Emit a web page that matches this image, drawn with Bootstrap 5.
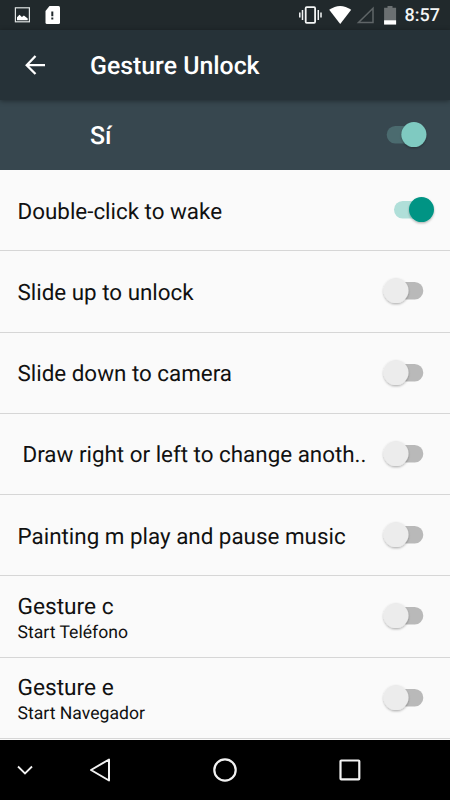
<!DOCTYPE html>
<html lang="es">
<head>
<meta charset="utf-8">
<meta name="viewport" content="width=device-width, initial-scale=1">
<title>Gesture Unlock</title>
<link href="https://cdn.jsdelivr.net/npm/bootstrap@5.3.0/dist/css/bootstrap.min.css" rel="stylesheet">
<style>
body{font-family:Roboto,"Liberation Sans",sans-serif;background:#fafafa;color:#111;height:800px;overflow:hidden;text-rendering:geometricPrecision}
svg{display:block;flex:none}
.status{height:30px;background:#21292c;padding:0 10px 0 14px}
.clock{font-size:18px;font-weight:500;line-height:30px;color:#f4f6f6;padding-top:2px}
.appbar{height:70px;background:#263238;padding-left:25px;box-shadow:0 1px 5px rgba(0,0,0,.4);z-index:1}
.heading{font-size:24.85px;font-weight:500;line-height:30px;padding-top:3px}
.master{height:70px;background:#37474f;padding:0 20.5px 0 90px}
.prefs{height:570px;overflow:hidden}
.pref{height:81.28px;flex:none;border-bottom:1px solid #d6d6d6;padding:0 22px 0 17.5px}
.pref-on{padding-right:13.5px}
.title{font-size:22.4px;line-height:28px;padding-top:3px}
.nudge{padding-left:5px}
.two-line{padding-top:1.5px}
.two-line .title{font-size:22.7px;padding-top:2px}
.summary{font-size:17.6px;line-height:22px;padding-top:1px}
.navkeys{height:60px;background:#000}
</style>
</head>
<body class="d-flex flex-column">
<svg width="0" height="0" class="position-absolute">
  <defs>
    <filter id="sh" x="-30%" y="-30%" width="160%" height="170%"><feDropShadow dx="0" dy="1.2" stdDeviation=".8" flood-color="#000" flood-opacity=".3"/></filter>
    <symbol id="off" viewBox="0 0 48 34"><rect x="9" y="8.1" width="34.3" height="17.3" rx="8.6" fill="#b9b9b9"/><circle cx="16" cy="16.6" r="12.5" fill="#ececec" filter="url(#sh)"/></symbol>
    <symbol id="on" viewBox="0 0 48 34"><rect x="5" y="8.1" width="34" height="17.3" rx="8.6" fill="#b0dfd9"/><circle cx="32.5" cy="16.6" r="12.5" fill="#069484" filter="url(#sh)"/></symbol>
    <symbol id="dim" viewBox="0 0 48 34"><rect x="4.7" y="8.1" width="34" height="17.3" rx="8.6" fill="#4b6b6f"/><circle cx="31.9" cy="16.6" r="12.5" fill="#7fcac1" filter="url(#sh)"/></symbol>
  </defs>
</svg>

<header class="status d-flex align-items-center justify-content-between">
  <svg width="50" height="30" viewBox="14 0 50 30">
    <rect x="15.4" y="7.8" width="14" height="14" fill="none" stroke="#dfe3e3" stroke-width="1.2"/>
    <path d="M17 20.3v-3l2.5-2.6 2.4 2.4 2-1.5 3.8 3v1.7z" fill="#fff"/>
    <path d="M49.5 6H58.5q1.5 0 1.5 1.5V22.5q0 1.5-1.5 1.5H47q-1.5 0-1.5-1.5V11z" fill="#fff"/>
    <path d="M51.3 11.5h2v4.8h-2zM51.3 17.5h2v2h-2z" fill="#21292c"/>
  </svg>
  <div class="d-flex align-items-center">
    <svg width="107" height="30" viewBox="298.5 0 107 30">
      <rect x="306.2" y="7.2" width="9.4" height="15.6" rx="1" fill="none" stroke="#f4f6f6" stroke-width="1.8"/>
      <path d="M303 10v10M300.3 12.5v5M318.8 10v10M321.5 12.5v5" stroke="#f4f6f6" stroke-width="1.5"/>
      <path d="M329.7 9.7Q340.6 2.1 351.7 9.7L340.7 24z" fill="#fff"/>
      <path d="M373.5 8.2V22.5H359z" fill="none" stroke="#5f6567" stroke-width="1.5"/>
      <path d="M388 6h5v1.8h3.6V24.5H384.6V7.8H388z" fill="#6b7072"/>
      <path d="M384.6 20.3h12v4.2h-12z" fill="#fff"/>
    </svg>
    <span class="clock">8:57</span>
  </div>
</header>

<nav class="appbar d-flex align-items-center position-relative text-white">
  <svg width="65" height="30" viewBox="25 50 65 30"><path d="M45 65.2H27M35.5 56L26.7 65.2L35.5 74" fill="none" stroke="#fff" stroke-width="2.3"/></svg>
  <h1 class="heading m-0">Gesture Unlock</h1>
</nav>

<div class="master d-flex align-items-center justify-content-between text-white">
  <span class="heading">Sí</span>
  <svg width="48" height="34"><use href="#dim"/></svg>
</div>

<main class="prefs d-flex flex-column">
  <div class="pref pref-on d-flex align-items-center justify-content-between"><div class="title">Double-click to wake</div><svg width="48" height="34"><use href="#on"/></svg></div>
  <div class="pref d-flex align-items-center justify-content-between"><div class="title">Slide up to unlock</div><svg width="48" height="34"><use href="#off"/></svg></div>
  <div class="pref d-flex align-items-center justify-content-between"><div class="title">Slide down to camera</div><svg width="48" height="34"><use href="#off"/></svg></div>
  <div class="pref d-flex align-items-center justify-content-between"><div class="title nudge text-nowrap">Draw right or left to change anoth..</div><svg width="48" height="34"><use href="#off"/></svg></div>
  <div class="pref d-flex align-items-center justify-content-between"><div class="title">Painting m play and pause music</div><svg width="48" height="34"><use href="#off"/></svg></div>
  <div class="pref d-flex align-items-center justify-content-between"><div class="two-line"><div class="title">Gesture c</div><div class="summary">Start Teléfono</div></div><svg width="48" height="34"><use href="#off"/></svg></div>
  <div class="pref d-flex align-items-center justify-content-between"><div class="two-line"><div class="title">Gesture e</div><div class="summary">Start Navegador</div></div><svg width="48" height="34"><use href="#off"/></svg></div>
</main>

<footer class="navkeys">
  <svg width="450" height="60" viewBox="0 740 450 60" fill="none" stroke="#f2f2f2">
    <path d="M18 766.5L25 773.5L32 766.5" stroke-width="1.8"/>
    <path d="M109 759.5V780.5L91 770z" stroke-width="2" stroke-linejoin="round"/>
    <circle cx="225" cy="770" r="10.7" stroke-width="2.2"/>
    <rect x="340.5" y="760.5" width="18.8" height="18.8" rx=".8" stroke-width="2.2"/>
  </svg>
</footer>
<script src="https://cdn.jsdelivr.net/npm/bootstrap@5.3.0/dist/js/bootstrap.bundle.min.js"></script>
</body>
</html>
